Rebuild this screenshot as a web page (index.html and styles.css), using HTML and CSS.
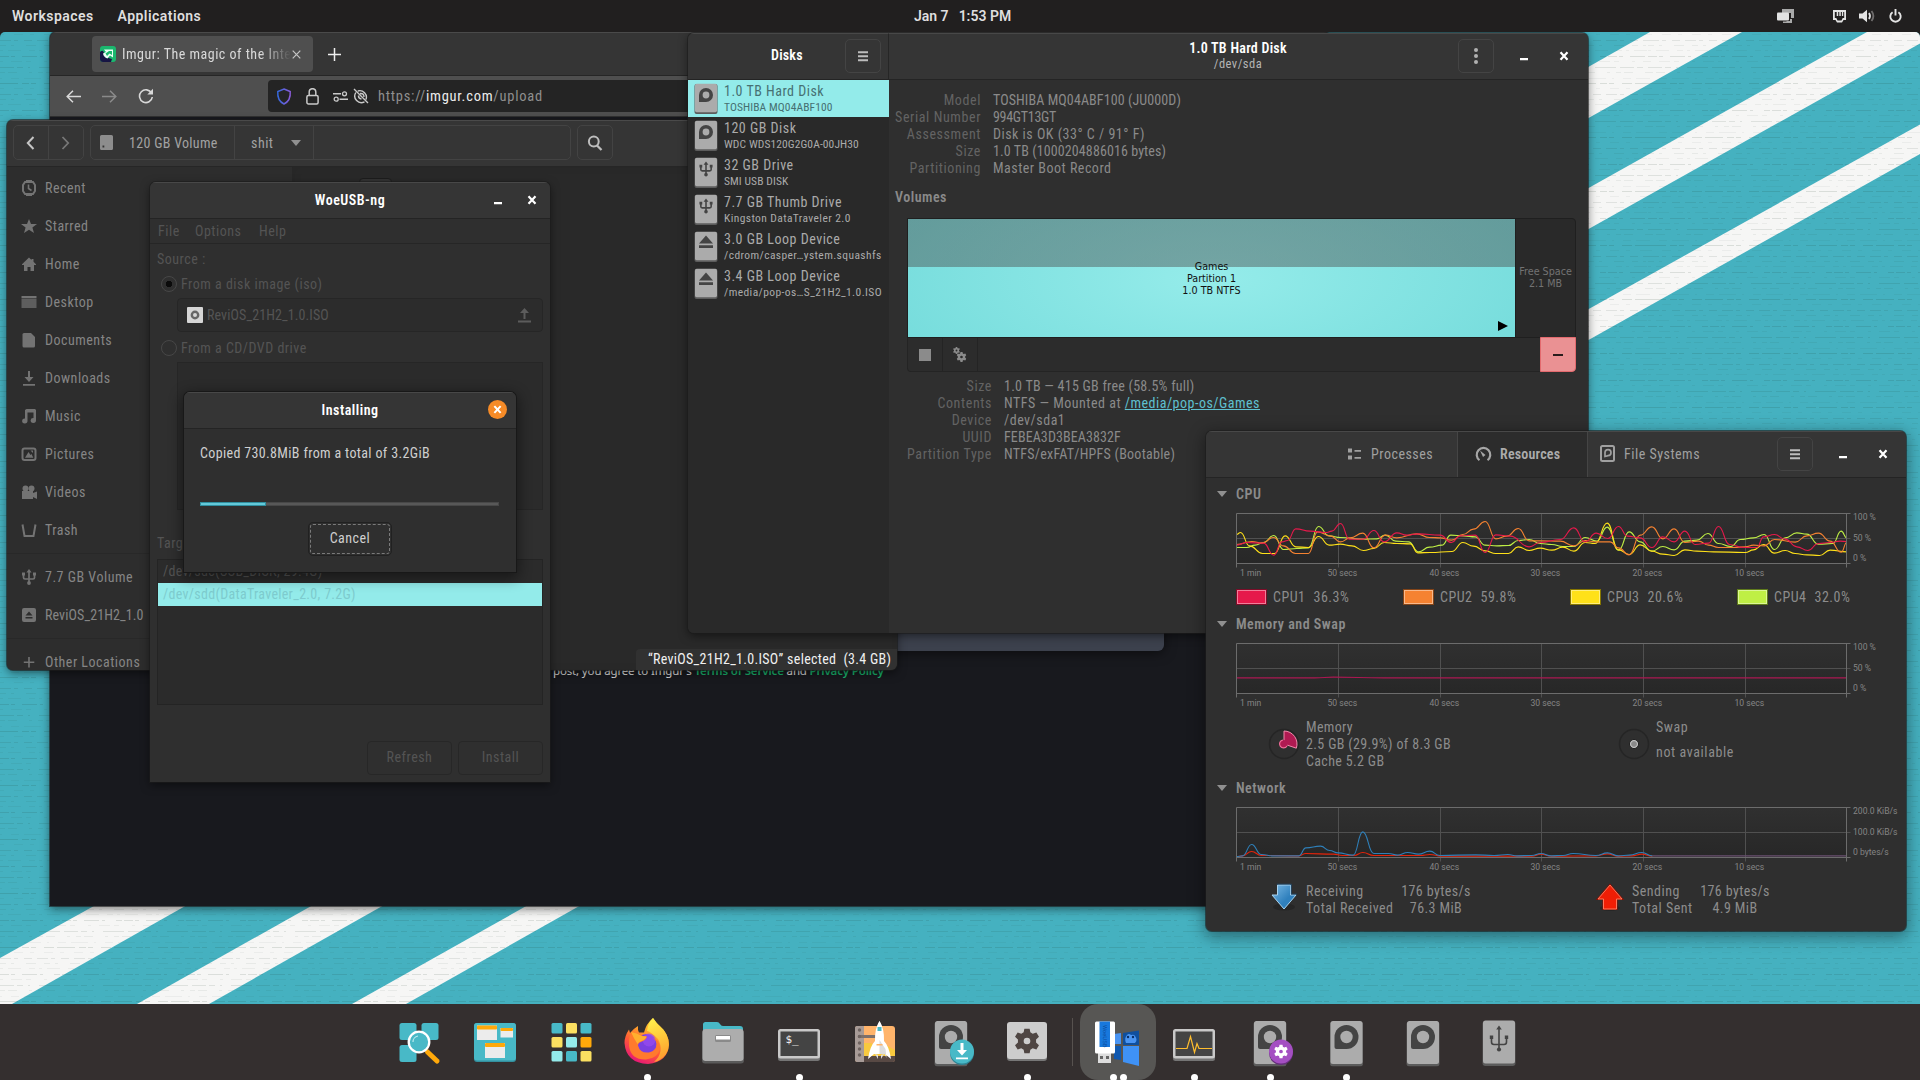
FILE: index.html
```html
<!DOCTYPE html>
<html lang="en">
<head>
<meta charset="utf-8">
<title>Desktop</title>
<link rel="stylesheet" href="styles.css">
</head>
<body>
<svg class="defs" width="0" height="0" aria-hidden="true">
  <defs>
    <symbol id="close" viewBox="0 0 10 10"><path d="M1.5 1.2 8.5 8.8M8.5 1.2 1.5 8.8" stroke="currentColor" stroke-width="2.2" fill="none"/></symbol>
    <symbol id="min" viewBox="0 0 10 10"><path d="M1 7h8v2.2H1z" fill="currentColor"/></symbol>
    <symbol id="menu" viewBox="0 0 12 12"><path d="M1 1.2h10v2H1zM1 5.2h10v2H1zM1 9.2h10v2H1z" fill="currentColor"/></symbol>
    <symbol id="usb" viewBox="0 0 16 16"><g fill="none" stroke="currentColor" stroke-width="1.7"><path d="M8 2.5V14M2.5 5v3.6q0 1.4 1.4 1.4h8.2q1.4 0 1.4-1.4V5"/></g><path d="M8 0l2.6 3.4H5.4z" fill="currentColor"/><path d="M1 3.5h3v3H1zM12 3.5h3v3h-3z" fill="currentColor"/><circle cx="8" cy="14" r="1.9" fill="currentColor"/></symbol>
    <symbol id="drive" viewBox="0 0 24 31"><rect x=".5" y="1" width="23" height="30" rx="2" fill="#5c5c5c"/><rect x="1" y=".8" width="22" height="28.4" rx="1.6" fill="#ababab"/></symbol>
    <symbol id="d-hdd" viewBox="0 0 24 31"><use href="#drive"/><path d="M5 19V12a7 7 0 1 1 7 7z" fill="#444"/><circle cx="12" cy="12" r="3.4" fill="#ababab"/></symbol>
    <symbol id="d-usb" viewBox="0 0 24 31"><use href="#drive"/><use href="#usb" x="4.5" y="4" width="15" height="16" color="#444"/></symbol>
    <symbol id="d-eject" viewBox="0 0 24 31"><use href="#drive"/><path d="M12 4.5 19 12.5H5zM5 14.3h14v2.8H5z" fill="#444"/></symbol>
    <symbol id="k-hdd" viewBox="0 0 34 46"><rect x=".5" y="1" width="33" height="45" rx="3" fill="#5c5c5c"/><rect x="1" y=".5" width="32" height="43" rx="2.500" fill="#acacac"/><path d="M5 16.500a12 12 0 1 1 12 12H7q-2 0-2-2z" fill="#444"/><circle cx="17" cy="16.500" r="6.200" fill="#acacac"/></symbol>
    <symbol id="gear" viewBox="0 0 24 24"><path fill="currentColor" fill-rule="evenodd" d="M9.500 0h5l.7 3.700 2.300 1.300L21 3.800l2.500 4.200-2.800 2.600v2.800l2.800 2.600L21 20.200l-3.500-1.200-2.300 1.300-.7 3.700h-5l-.7-3.700L6.500 19 3 20.200.5 16l2.800-2.600v-2.800L.5 8 3 3.800 6.500 5l2.300-1.300zM12 8.800a3.200 3.200 0 1 0 0 6.400 3.200 3.200 0 1 0 0-6.400z"/></symbol>
  </defs>
</svg>

<header class="topbar">
  <div class="topbar-side"><span class="ws">Workspaces</span><span class="apps">Applications</span></div>
  <div class="clock"><span>Jan 7</span><span>1:53 PM</span></div>
  <div class="tray">
    <svg class="tray-win" width="17" height="15" viewBox="0 0 17 15"><path d="M5 0h12v9h-3V4H5zM6 12.500h3.500V12H13V10h2v4H6z" fill="#a9a9a9"/><rect x="0" y="3.500" width="12" height="8" rx="1" fill="#e2e2e2"/></svg>
    <svg class="tray-net" width="15" height="13" viewBox="0 0 15 13"><path fill-rule="evenodd" fill="#e4e4e4" d="M1 0h13v10h-2.500l-1.500 2.500H5L3.500 10H1zM2.800 2v6h1.500l1.200 2.500h4L10.700 8h1.500V2h-1v4h-1.300V2H8.800v4H7.300V2H6.200v4H4.700V2z"/></svg>
    <svg class="tray-vol" width="17" height="14" viewBox="0 0 17 14"><path d="M0 4.500h3.500L8 0.800v12.400L3.500 9.500H0z" fill="#e4e4e4"/><path d="M10 4q2 3 0 6" stroke="#e4e4e4" stroke-width="1.800" fill="none"/><path d="M12.500 2q3.800 5 0 10" stroke="#6f6d6d" stroke-width="1.800" fill="none"/></svg>
    <svg width="13" height="14" viewBox="0 0 13 14"><path d="M3.600 3.200a5.200 5.200 0 1 0 5.800 0M6.500 0v6.500" stroke="#e4e4e4" stroke-width="1.900" fill="none"/></svg>
  </div>
</header>

<main class="desktop">
  <svg class="wallpaper" width="1920" height="972" viewBox="0 32 1920 972">
    <defs>
      <pattern id="weave" width="412" height="54" patternUnits="userSpaceOnUse">
        <g stroke="#17301f" stroke-width="1">
          <path d="M0 2.500H412" stroke-dasharray="9 2 4 7 15 3 3 11 6 2" opacity=".12"/>
          <path d="M0 7.500H412" stroke-dasharray="3 8 11 4 5 13" opacity=".06"/>
          <path d="M0 13.500H412" stroke-dasharray="14 3 6 5 2 9 21 4" opacity=".11"/>
          <path d="M0 18.500H412" stroke-dasharray="5 3 9 12 3 6" opacity=".07"/>
          <path d="M0 24.500H412" stroke-dasharray="2 9 8 5 17 6" opacity=".05"/>
          <path d="M0 29.500H412" stroke-dasharray="18 4 7 2 5 8 10 3" opacity=".13"/>
          <path d="M0 34.500H412" stroke-dasharray="4 10 9 7" opacity=".05"/>
          <path d="M0 40.500H412" stroke-dasharray="11 3 4 6 8 5" opacity=".1"/>
          <path d="M0 45.500H412" stroke-dasharray="6 5 3 12 10 8" opacity=".07"/>
          <path d="M0 50.500H412" stroke-dasharray="3 5 13 8 6 4" opacity=".06"/>
        </g>
      </pattern>
    </defs>
    <rect y="32" width="1920" height="972" fill="#45b1c0"/>
    <g fill="#f6f6f5">
      <path d="M1650 32H1742L1560 134V83z"/>
      <path d="M1867 32H1920V43.500L1560 245V204z"/>
      <path d="M1920 124.500V154L1560 356V325z"/>
      <path d="M112 896H203L12 1004H0V958z"/>
      <path d="M329 896H400L209 1004H137z"/>
      <path d="M544 896H597L406 1004H352z"/>
    </g>
    <rect y="32" width="1920" height="972" fill="url(#weave)"/>
  </svg>

  <section class="window firefox">
    <div class="ff-tabs">
      <div class="ff-tab">
        <svg width="16" height="16" viewBox="0 0 16 16"><rect width="16" height="16" rx="3" fill="#1bb76e"/><path d="M0 6q3-3 4 1 2 5 8 6l-1 3H3q-3 0-3-3z" fill="#171544"/><path d="M4 3.500h9v8l-3-2-2.500 3q-4-1.500-4.500-5l3-1.500z" fill="#e9fff4"/><path d="M5.500 7.500 9 5h3v4L9.500 7.500 7 10z" fill="#1bb76e"/></svg>
        <span class="ff-title">Imgur: The magic of the Internet</span>
        <svg class="ff-x" width="9" height="9" viewBox="0 0 9 9"><path d="M.7.700 8.300 8.300M8.300.700.7 8.300" stroke="#c4c4c4" stroke-width="1.200"/></svg>
      </div>
      <svg class="ff-plus" width="13" height="13" viewBox="0 0 13 13"><path d="M6.500 0v13M0 6.500h13" stroke="#f0f0f0" stroke-width="1.500"/></svg>
    </div>
    <div class="ff-nav">
      <svg width="15" height="13" viewBox="0 0 15 13" class="n-back"><path d="M15 6.500H1.500M7 .8 1.200 6.500 7 12.200" stroke="#d8d8d8" stroke-width="1.500" fill="none"/></svg>
      <svg width="15" height="13" viewBox="0 0 15 13" class="n-fwd"><path d="M0 6.500h13.500M8 .8l5.800 5.700L8 12.200" stroke="#8a8a8a" stroke-width="1.500" fill="none"/></svg>
      <svg width="16" height="16" viewBox="0 0 16 16" class="n-rel"><path d="M13.600 5.200A6.400 6.400 0 1 0 14.300 9" stroke="#d8d8d8" stroke-width="1.600" fill="none"/><path d="M15 .8V6.500H9.300z" fill="#d8d8d8"/></svg>
      <div class="ff-url">
        <svg width="16" height="17" viewBox="0 0 16 17"><path d="M8 1 14.200 3.500Q15 12.500 8 16 1 12.500 1.800 3.500z" stroke="url(#sh)" stroke-width="1.500" fill="none"/><defs><linearGradient id="sh" x2="1"><stop stop-color="#3468dc"/><stop offset="1" stop-color="#8a5bd8"/></linearGradient></defs></svg>
        <svg width="13" height="17" viewBox="0 0 13 17"><rect x=".9" y="7.500" width="11.200" height="8.500" rx="1.500" stroke="#c9c9c9" stroke-width="1.500" fill="none"/><path d="M3.200 7.500V4a3.300 3.300 0 0 1 6.600 0v3.500" stroke="#c9c9c9" stroke-width="1.500" fill="none"/></svg>
        <svg width="15" height="11" viewBox="0 0 15 11"><path d="M0 2.800h8M6.500 8.200H15" stroke="#c9c9c9" stroke-width="1.500"/><circle cx="11.500" cy="2.800" r="2" stroke="#c9c9c9" stroke-width="1.300" fill="none"/><circle cx="3.200" cy="8.200" r="2" stroke="#c9c9c9" stroke-width="1.300" fill="none"/></svg>
        <svg width="16" height="16" viewBox="0 0 16 16"><path d="M1 1l14 14M4.800 3A6.600 6.600 0 0 1 13 11.500M2.800 4.500A6.600 6.600 0 0 0 11.500 13.800M7 5.500q4-.5 4 3.500M5.500 7.500q-.2 3 3 3.500" stroke="#c9c9c9" stroke-width="1.400" fill="none"/></svg>
        <span class="url">https://<b>imgur.com</b>/upload</span>
      </div>
    </div>
    <div class="ff-page">
      <div class="ff-dropzone"></div>
      <p class="ff-terms">post, you agree to Imgur's <b>Terms of Service</b> and <b>Privacy Policy</b></p>
    </div>
  </section>

  <section class="window files">
    <div class="fl-head">
      <div class="btn-group nav-group">
        <span><svg width="9" height="14" viewBox="0 0 9 14"><path d="M7.500 1 1.800 7l5.700 6" stroke="#c5c5c5" stroke-width="2" fill="none"/></svg></span>
        <span><svg width="9" height="14" viewBox="0 0 9 14"><path d="M1.500 1 7.200 7l-5.700 6" stroke="#777" stroke-width="1.800" fill="none"/></svg></span>
      </div>
      <div class="btn-group path-group">
        <span class="p-vol"><svg width="13" height="15" viewBox="0 0 13 15"><path fill-rule="evenodd" fill="#8d8d8d" d="M1.500 0h10q1.500 0 1.500 1.500v12q0 1.500-1.500 1.500h-10Q0 15 0 13.500v-12Q0 0 1.500 0zM2.500 10.500v2h1.800v-2z"/></svg>120 GB Volume</span>
        <span class="p-dir">shit<i class="tri"></i></span>
        <span class="p-rest"></span>
      </div>
      <div class="btn-group find-group"><span><svg width="16" height="16" viewBox="0 0 16 16"><circle cx="6.800" cy="6.500" r="4.900" stroke="#bdbdbd" stroke-width="2" fill="none"/><path d="M10 10.500l4.500 4.500" stroke="#bdbdbd" stroke-width="2.300"/></svg></span></div>
    </div>
    <div class="fl-body">
      <nav class="fl-side">
        <div class="fl-row"><svg viewBox="0 0 16 16"><path fill="none" stroke="currentColor" stroke-width="2" d="M4 2h8l2 3v6l-2 3H4l-2-3V5z"/><path d="M5 0h6v2H5zM5 14h6v2H5z" fill="currentColor"/><path d="M7.500 4.500V8.500l3 2" stroke="currentColor" stroke-width="1.600" fill="none"/></svg>Recent</div>
        <div class="fl-row"><svg viewBox="0 0 16 16"><path fill="currentColor" d="M8 1l2 5h6l-4.600 3.500L13 15 8 11.800 3 15l1.600-5.500L0 6h6z"/></svg>Starred</div>
        <div class="fl-row"><svg viewBox="0 0 16 16"><path fill="currentColor" d="M8 1.500 1 8.200V9h2v6h3.500v-4h3v4H13V9h2V8.200L12.500 5.800V3h-2v1z"/></svg>Home</div>
        <div class="fl-row"><svg viewBox="0 0 16 16"><path fill="currentColor" d="M.5 2h15v2H.5z"/><path fill="currentColor" opacity=".7" d="M.5 4.500h15V14H.5z"/></svg>Desktop</div>
        <div class="fl-row"><svg viewBox="0 0 16 16"><path fill="currentColor" d="M3 1h7l4 4v9q0 1.500-1.500 1.500H3Q1.500 15.500 1.500 14V2.500Q1.500 1 3 1z"/></svg>Documents</div>
        <div class="fl-row"><svg viewBox="0 0 16 16"><path fill="currentColor" d="M7 1h2v6h3.500L8 12 3.500 7H7zM2 14h12v1.800H2z"/></svg>Downloads</div>
        <div class="fl-row"><svg viewBox="0 0 16 16"><path fill="currentColor" d="M4 2l1.500-1H14l1 1v10.500a2.700 2.500 0 1 1-2.500-2.500V4.500h-6V13a2.700 2.500 0 1 1-2.500-2.500z"/></svg>Music</div>
        <div class="fl-row"><svg viewBox="0 0 16 16"><rect x="1.500" y="2.500" width="13" height="11.500" rx="2" stroke="currentColor" stroke-width="2" fill="none"/><path fill="currentColor" d="M4 11.800 7.500 6l2 3 1-1 1.800 3.800zM9.500 4.500H12V7z"/></svg>Pictures</div>
        <div class="fl-row"><svg viewBox="0 0 16 16"><circle cx="4.500" cy="4.500" r="3" fill="currentColor"/><circle cx="10.500" cy="4.500" r="3" fill="currentColor"/><path fill="currentColor" d="M1 7h11v2l4-1.500V15l-4-2v2H1z"/></svg>Videos</div>
        <div class="fl-row"><svg viewBox="0 0 16 16"><path d="M1.500 2.500 3.500 14h9l2-11.500" stroke="currentColor" stroke-width="2" fill="none"/></svg>Trash</div>
        <hr>
        <div class="fl-row dev"><svg viewBox="0 0 16 16"><use href="#usb"/></svg>7.7 GB Volume</div>
        <div class="fl-row dev tight"><svg viewBox="0 0 16 16"><path fill="currentColor" fill-rule="evenodd" d="M3 1h10q2 0 2 2v10q0 2-2 2H3q-2 0-2-2V3q0-2 2-2zM8 4.500 4.500 8.500h7zM4.500 10v1.600h7V10z"/></svg>ReviOS_21H2_1.0</div>
        <hr>
        <div class="fl-row dev"><svg viewBox="0 0 16 16"><path d="M8 3v10.500M2.800 8.200h10.500" stroke="currentColor" stroke-width="1.600"/></svg>Other Locations</div>
      </nav>
      <div class="fl-main"><i class="fl-folder"></i><div class="fl-status">“ReviOS_21H2_1.0.ISO” selected&nbsp; (3.4 GB)</div></div>
    </div>
  </section>

  <section class="window woe">
    <div class="titlebar"><span class="title">WoeUSB-ng</span><span class="ctl"><svg><use href="#min"/></svg><svg><use href="#close"/></svg></span></div>
    <div class="woe-menu"><span class="m1">File</span><span class="m2">Options</span><span>Help</span></div>
    <div class="woe-body">
      <div class="woe-label">Source :</div>
      <div class="woe-radio"><i class="radio on"></i>From a disk image (iso)</div>
      <div class="woe-file"><svg width="16" height="16" viewBox="0 0 16 16"><rect width="16" height="16" rx="1" fill="#d6d6d6"/><circle cx="8" cy="8" r="3.200" fill="none" stroke="#666" stroke-width="2.400"/></svg><span class="tight">ReviOS_21H2_1.0.ISO</span><svg class="up" width="15" height="16" viewBox="0 0 15 16"><path d="M6.500 12V6H3l4.500-5L12 6H8.500v6zM1 13.500h13v2H1z" fill="#5c5c5c"/></svg></div>
      <div class="woe-radio r2"><i class="radio"></i>From a CD/DVD drive</div>
      <div class="woe-dvd"></div>
      <div class="woe-label target">Target device :</div>
      <div class="woe-list"><div>/dev/sdc(USB_DISK, 29.4G)</div><div class="sel">/dev/sdd(DataTraveler_2.0, 7.2G)</div></div>
      <div class="woe-btns"><span>Refresh</span><span>Install</span></div>
    </div>
  </section>

  <section class="window dialog">
    <div class="titlebar"><span class="title">Installing</span><span class="orange"><svg width="9" height="9"><use href="#close"/></svg></span></div>
    <div class="dlg-body">
      <p>Copied 730.8MiB from a total of 3.2GiB</p>
      <div class="bar"><i></i></div>
      <div class="cancel"><span>Cancel</span></div>
    </div>
  </section>

  <section class="window disks">
    <aside class="dk-side">
      <div class="dk-head"><span class="title">Disks</span><span class="hbtn"><svg width="12" height="12"><use href="#menu"/></svg></span></div>
      <div class="dk-row sel"><svg><use href="#d-hdd"/></svg><p>1.0 TB Hard Disk<small class="tight">TOSHIBA MQ04ABF100</small></p></div>
      <div class="dk-row"><svg><use href="#d-hdd"/></svg><p>120 GB Disk<small class="tight">WDC WDS120G2G0A-00JH30</small></p></div>
      <div class="dk-row"><svg><use href="#d-usb"/></svg><p>32 GB Drive<small class="tight">SMI USB DISK</small></p></div>
      <div class="dk-row"><svg><use href="#d-usb"/></svg><p>7.7 GB Thumb Drive<small>Kingston DataTraveler 2.0</small></p></div>
      <div class="dk-row"><svg><use href="#d-eject"/></svg><p>3.0 GB Loop Device<small>/cdrom/casper…ystem.squashfs</small></p></div>
      <div class="dk-row"><svg><use href="#d-eject"/></svg><p>3.4 GB Loop Device<small>/media/pop-os…S_21H2_1.0.ISO</small></p></div>
    </aside>
    <div class="dk-main">
      <div class="dk-head2">
        <div class="dk-title"><b>1.0 TB Hard Disk</b><span>/dev/sda</span></div>
        <span class="hbtn kebab"><svg width="6" height="16" viewBox="0 0 6 16" fill="#b0b0b0"><circle cx="3" cy="2" r="2"/><circle cx="3" cy="8" r="2"/><circle cx="3" cy="14" r="2"/></svg></span>
        <svg class="c-min"><use href="#min"/></svg><svg class="c-x"><use href="#close"/></svg>
      </div>
      <dl class="info top">
        <dt>Model</dt><dd class="tight">TOSHIBA MQ04ABF100 (JU000D)</dd>
        <dt>Serial Number</dt><dd class="tighter">994GT13GT</dd>
        <dt>Assessment</dt><dd>Disk is OK (33° C / 91° F)</dd>
        <dt>Size</dt><dd class="tight">1.0 TB (1000204886016 bytes)</dd>
        <dt>Partitioning</dt><dd>Master Boot Record</dd>
      </dl>
      <h3>Volumes</h3>
      <div class="vol">
        <div class="part"><p>Games<br>Partition 1<br>1.0 TB NTFS</p><i class="play"></i></div>
        <div class="free">Free Space<br>2.1 MB</div>
      </div>
      <div class="vtools">
        <span><i class="stop"></i></span>
        <span><svg width="14" height="15" viewBox="0 0 14 15" color="#8b8b8b"><use href="#gear" x="0" y="0" width="7" height="7"/><use href="#gear" x="3.500" y="5" width="10" height="10"/></svg></span>
        <span class="del"><i></i></span>
      </div>
      <dl class="info bottom">
        <dt>Size</dt><dd class="snug">1.0 TB — 415 GB free (58.5% full)</dd>
        <dt>Contents</dt><dd>NTFS — Mounted at <u>/media/pop-os/Games</u></dd>
        <dt>Device</dt><dd>/dev/sda1</dd>
        <dt>UUID</dt><dd class="tight">FEBEA3D3BEA3832F</dd>
        <dt>Partition Type</dt><dd class="snug">NTFS/exFAT/HPFS (Bootable)</dd>
      </dl>
    </div>
  </section>

  <section class="window mon">
    <div class="mn-head">
      <div class="tab t1"><svg width="14" height="12" viewBox="0 0 14 12" fill="#a0a0a0"><path d="M0 .5h4v4H0zM6.500 2H13v1.700H6.500zM0 7.500h4v4H0zM6.500 9H13v1.700H6.500z"/></svg>Processes</div>
      <div class="tab t2"><svg width="17" height="16" viewBox="0 0 17 16"><path d="M4.500 14.200a6.800 6.800 0 1 1 8 0" stroke="#a6a6a6" stroke-width="2.200" fill="none"/><path d="M5 4.500 10.500 9 8 11z" fill="#a6a6a6"/></svg>Resources</div>
      <div class="tab t3"><svg width="15" height="17" viewBox="0 0 15 17"><rect x="1" y="1" width="13" height="15" rx="1.500" stroke="#a0a0a0" stroke-width="2" fill="none"/><path d="M5 11.500V7.500a3 3 0 1 1 3 3.200z" stroke="#a0a0a0" stroke-width="1.700" fill="none"/></svg>File Systems</div>
      <span class="hbtn"><svg width="12" height="12"><use href="#menu"/></svg></span>
      <svg class="c-min"><use href="#min"/></svg><svg class="c-x"><use href="#close"/></svg>
    </div>
    <h4 class="h-cpu"><i class="tri"></i>CPU</h4>
    <svg class="chart" data-chart="cpu" data-top="100 %" data-mid="50 %" data-low="0 %"></svg>
    <div class="legend">
      <span><i class="c1"></i>CPU1<em>36.3%</em></span><span><i class="c2"></i>CPU2<em>59.8%</em></span><span><i class="c3"></i>CPU3<em>20.6%</em></span><span><i class="c4"></i>CPU4<em>32.0%</em></span>
    </div>
    <h4 class="h-mem"><i class="tri"></i>Memory and Swap</h4>
    <svg class="chart" data-chart="mem" data-top="100 %" data-mid="50 %" data-low="0 %"></svg>
    <div class="pair mem">
      <div><svg width="32" height="32" viewBox="0 0 32 32"><circle cx="16" cy="16" r="14.500" fill="none" stroke="#252525" stroke-width="1.500"/><path d="M16 3A13 13 0 0 1 28.300 20.200L16 16z" fill="#b01a52" stroke="#ee8aab" stroke-width="1"/><circle cx="15.500" cy="16" r="4" fill="#b01a52"/><path d="M15 12a4 4 0 1 0 4 6" fill="none" stroke="#ee6d98" stroke-width="1.200"/></svg><p>Memory<br>2.5 GB (29.9%) of 8.3 GB<br>Cache 5.2 GB</p></div>
      <div><svg width="32" height="32" viewBox="0 0 32 32"><circle cx="16" cy="16" r="14.500" fill="none" stroke="#252525" stroke-width="1.500"/><circle cx="16" cy="16" r="4.500" fill="#8a8a8a" stroke="#1d1d1d"/><circle cx="16" cy="16" r="3.500" fill="none" stroke="#c9c9c9"/></svg><p class="swap">Swap<span>not available</span></p></div>
    </div>
    <h4 class="h-net"><i class="tri"></i>Network</h4>
    <svg class="chart" data-chart="net" data-top="200.0 KiB/s" data-mid="100.0 KiB/s" data-low="0 bytes/s"></svg>
    <div class="pair net">
      <div><svg width="28" height="30" viewBox="0 0 28 30"><defs><linearGradient id="gb" x2="1" y2="1"><stop stop-color="#7ab8e4"/><stop offset=".6" stop-color="#2f80bd"/></linearGradient></defs><ellipse cx="14" cy="25" rx="11" ry="3.500" fill="#222" opacity=".7"/><path d="M7.500 3h13v10H26L14 27 2 13h5.500z" fill="url(#gb)" stroke="#a8d2ee"/><path d="M6.800 2.200h14.500v10h5.800" fill="none" stroke="#1d527c" stroke-width=".7"/></svg><p>Receiving<br>Total Received</p><p class="val v1">176 bytes/s<br>76.3 MiB</p></div>
      <div><svg width="28" height="30" viewBox="0 0 28 30"><ellipse cx="14" cy="26" rx="10" ry="3" fill="#222" opacity=".7"/><path d="M7.500 27h13V17H26L14 3 2 17h5.500z" fill="#f01e05" stroke="#8d0d00" stroke-width="2"/><path d="M7.500 27h13V17H26L14 3 2 17h5.500z" fill="#f01e05" stroke="#ff8468" stroke-width=".9"/></svg><p>Sending<br>Total Sent</p><p class="val v2">176 bytes/s<br>4.9 MiB</p></div>
    </div>
  </section>
</main>

<footer class="dock">
  <div class="slot"><svg viewBox="0 0 76 76"><g fill="#48b9c7"><rect x="18.500" y="19" width="17" height="17" rx="2.500"/><rect x="40.500" y="19" width="17" height="17" rx="2.500"/><rect x="18.500" y="41" width="17" height="17" rx="2.500"/></g><path d="M46.500 48 56 57" stroke="#ffa90a" stroke-width="5" stroke-linecap="round"/><circle cx="38" cy="38" r="10.300" fill="#48b9c7" stroke="#fff" stroke-width="2.300"/><path d="M32 38a6 6 0 0 1 5-6" stroke="#b7e9ef" stroke-width="1.200" fill="none"/></svg></div>
  <div class="slot"><svg viewBox="0 0 76 76"><rect x="17" y="19" width="42" height="39" rx="3" fill="#34909f"/><rect x="17" y="19" width="42" height="37.500" rx="3" fill="#48b9c7"/><g fill="#ececec"><rect x="20" y="21.500" width="20" height="14.500"/><rect x="43.500" y="24" width="12.500" height="9.500"/><rect x="28" y="39" width="20" height="15"/></g><g fill="#ffa90a"><rect x="20" y="21.500" width="20" height="4" rx="1"/><rect x="43.500" y="24" width="12.500" height="3" rx="1"/><rect x="28" y="39" width="20" height="4" rx="1"/></g></svg></div>
  <div class="slot"><svg viewBox="0 0 76 76"><g fill="#48b9c7"><rect x="18.500" y="19" width="11" height="10.500" rx="1.500"/><rect x="47.500" y="19" width="11" height="10.500" rx="1.500"/><rect x="33" y="47" width="11" height="10.500" rx="1.500"/></g><g fill="#fbe061"><rect x="33" y="19" width="11" height="10.500" rx="1.500"/><rect x="18.500" y="33" width="11" height="10.500" rx="1.500"/><rect x="47.500" y="47" width="11" height="10.500" rx="1.500"/></g><g fill="#94ebeb"><rect x="33" y="33" width="11" height="10.500" rx="1.500"/><rect x="18.500" y="47" width="11" height="10.500" rx="1.500"/></g><rect x="47.500" y="33" width="11" height="10.500" rx="1.500" fill="#ffa90a"/></svg></div>
  <div class="slot"><svg viewBox="0 0 76 76"><defs><linearGradient id="fx" x1=".8" y1="0" x2=".3" y2="1"><stop stop-color="#ffe83e"/><stop offset=".35" stop-color="#ffa42a"/><stop offset=".65" stop-color="#ff5a36"/><stop offset="1" stop-color="#e5137b"/></linearGradient><linearGradient id="fy" x1=".3" y1="0" x2=".7" y2="1"><stop stop-color="#fff44f"/><stop offset="1" stop-color="#ffa52c"/></linearGradient></defs><path d="M44 14q4 6 8 9 8 8 8 17.500Q59 58 39 60 17 59 15.500 39q0-7 4.500-13.500l1 3.500q3-4 8-7-.5 4 1 6.500h5Q37 20 44 14z" fill="url(#fx)"/><path d="M44 14q6 9 10 11 8 10 5 21-4 10-14 12Q56 48 49 35q-8-8-11-8 1-8 6-13z" fill="url(#fy)" opacity=".85"/><circle cx="37.500" cy="40" r="10" fill="#7b3fe0"/><circle cx="40" cy="36" r="6.500" fill="#9a4df0" opacity=".7"/><path d="M22 29q7 0 12 3l4 .5q-.5 3-5 5-4 1-4 4 2 8 11 7 8-2 8-9-2-5-5-6 8 2 8 11-2 10-14 11Q22 56 20 42q-.5-8 2-13z" fill="#ff7a2d"/><path d="M22 28q6 1 11 4l4.500.5q-1 3-5 4.500-3 1-4 3-4-6-6.500-12z" fill="#ffb02e"/></svg><i class="dot"></i></div>
  <div class="slot"><svg viewBox="0 0 76 76"><path d="M18 31V20.500q0-2.500 2.500-2.500H32q2 0 3 2t3 2h17q3 0 3 3v5z" fill="#48b9c7"/><rect x="17" y="26" width="42" height="33.500" rx="3" fill="#5a5a5a"/><rect x="17.500" y="25" width="41" height="32" rx="3" fill="#adadad"/><rect x="30" y="31" width="16" height="7" rx="1.500" fill="#8a8a8a"/><rect x="31" y="32" width="14" height="3.500" fill="#fff"/></svg></div>
  <div class="slot"><svg viewBox="0 0 76 76"><rect x="17" y="26" width="42" height="31" rx="2.500" fill="#757575"/><rect x="17" y="25" width="42" height="29.500" rx="2.500" fill="#c9c9c9"/><rect x="19.500" y="27.500" width="37" height="24.500" fill="#444"/><text x="24.500" y="38.500" class="prompt">$_</text></svg><i class="dot"></i></div>
  <div class="slot"><svg viewBox="0 0 76 76"><rect x="18" y="22" width="40" height="36" rx="3" fill="#ffb46b"/><path d="M24 39h10l5 3 10-1 9 5v7H24z" fill="#f8c93f"/><path d="M24 52h34v4q0 2-2 2H24z" fill="#584944"/><path d="M27 22h-7q-2 0-2 2v32q0 2 2 2h7z" fill="#a79b97"/><path d="M21 31h18v3H21z" fill="#7c706c"/><g fill="#6f6461"><circle cx="22.500" cy="26" r="1.700"/><circle cx="22.500" cy="32.500" r="1.700"/><circle cx="22.500" cy="39" r="1.700"/><circle cx="22.500" cy="45" r="1.700"/><circle cx="22.500" cy="51" r="1.700"/></g><path d="M42.500 17q5 8 4.500 20 5 5 7 18l-6-5h-11l-6 5q2-13 7-18-.5-12 4.500-20z" fill="#fff"/><path d="M42.500 36v14h5l2 4-1-9zM38 50l3 1v4zM47 50l-3 1v4z" fill="#ddd"/><path d="M42.500 17q2 3.500 2.500 7h-5q.5-3.500 2.500-7z" fill="#fff"/><path d="M40.500 23h4v4h-4z" fill="#48b9c7"/><path d="M39.500 40h6v1.500h-6z" fill="#ffb46b"/></svg></div>
  <div class="slot"><svg viewBox="0 0 76 76"><use href="#k-hdd" x="21" y="16.500" width="34" height="46"/><circle cx="49" cy="49" r="12" fill="#2f8494"/><circle cx="49" cy="47.500" r="12" fill="#48b9c7"/><path d="M47.500 39h3v7h3.500L49 51.500 44 46h3.500zM43 53.500h12v1.800H43z" fill="#fff"/></svg></div>
  <div class="slot"><svg viewBox="0 0 76 76"><rect x="18" y="19" width="40" height="38" rx="3" fill="#777"/><rect x="18" y="18" width="40" height="37" rx="3" fill="#cdcdcd"/><use href="#gear" x="25.500" y="24.500" width="25" height="25" color="#4f4643"/></svg><i class="dot"></i></div>
  <div class="sep"></div>
  <div class="slot active"><svg viewBox="0 0 76 76"><path d="M34 30 41 29V40H34z" fill="#4a94f2"/><path d="M43 29 59 26.500V41H43z" fill="#0f4f9e"/><path d="M34 42h7v14l-7-1z" fill="#0f58b0"/><path d="M43 42h16v20l-16-4z" fill="#3f92f6"/><path d="M46 39q-2-5 1-8 2-2 4 0 3-1 4 1 3 4 0 7z" fill="#4a94f2"/><circle cx="48" cy="33" r="1.200" fill="#0a2f66"/><circle cx="53" cy="33" r="1.200" fill="#0a2f66"/><rect x="18" y="47" width="13" height="12" fill="#ddd"/><path d="M20 52h3v3h-3zM26 52h3v3h-3z" fill="#666"/><rect x="15" y="17.500" width="20" height="32" rx="1.500" fill="#fff"/><rect x="19.500" y="17.500" width="10.500" height="25.500" fill="#1878dd"/><text transform="translate(22.500 21) rotate(90)" class="stick">WoeUSB</text></svg><i class="dot two"></i></div>
  <div class="slot"><svg viewBox="0 0 76 76"><rect x="17" y="26" width="42" height="31" rx="2.500" fill="#757575"/><rect x="17" y="25" width="42" height="29.500" rx="2.500" fill="#c9c9c9"/><rect x="19.500" y="27.500" width="37" height="24.500" fill="#444"/><path d="M20 44.500h11l3.500-12 4 16 2.500-9 2 5h13" stroke="#ffbe2e" stroke-width="1.200" fill="none"/></svg><i class="dot"></i></div>
  <div class="slot"><svg viewBox="0 0 76 76"><use href="#k-hdd" x="21" y="16.500" width="34" height="46"/><circle cx="49" cy="49" r="12" fill="#65307a"/><circle cx="49" cy="47.500" r="12" fill="#a44fc2"/><use href="#gear" x="42" y="40.500" width="14" height="14" color="#fff"/></svg><i class="dot"></i></div>
  <div class="slot"><svg viewBox="0 0 76 76"><use href="#k-hdd" x="21.500" y="16.500" width="34" height="46"/></svg><i class="dot"></i></div>
  <div class="slot"><svg viewBox="0 0 76 76"><use href="#k-hdd" x="22" y="16.500" width="34" height="46"/></svg></div>
  <div class="slot"><svg viewBox="-1 0 76 76"><rect x="21.500" y="17" width="33" height="45" rx="3" fill="#5c5c5c"/><rect x="22" y="16.500" width="32" height="43" rx="2.500" fill="#acacac"/><path d="M38 24v20M30.500 33v5q0 2.500 2.500 2.500h10q2.500 0 2.500-2.500v-5" fill="none" stroke="#444" stroke-width="1.600"/><path d="M38 21.500l2.800 4h-5.600zM28.800 31.500h3.400v3.400h-3.400zM43.800 31.500h3.400v3.400h-3.400z" fill="#444"/><circle cx="38" cy="45.500" r="2.100" fill="#444"/></svg></div>
</footer>
<script src="charts.js"></script>
</body>
</html>
```
FILE: styles.css
```css
* { box-sizing: border-box; }
body { margin: 0; width: 1920px; height: 1080px; overflow: hidden; background: #211f1f; font: 14px "Roboto", "Noto Sans", sans-serif; font-stretch: 87.5%; letter-spacing: .5px; color: #8c8c8c; display: flex; flex-direction: column; }
p, dl, dd, h3, h4 { margin: 0; }
svg { display: block; flex: none; }
.defs { position: absolute; }
b, .title { font-weight: 600; }
.snug { letter-spacing: .25px; }
.tight { letter-spacing: .1px; }
.tighter { letter-spacing: -.3px; }

/* top panel */
.topbar { height: 32px; flex: none; display: grid; grid-template-columns: 914px 1fr auto; align-items: center; color: #dfdede; font-weight: 600; font-stretch: 100%; letter-spacing: 0; }
.topbar-side { padding-left: 12px; display: flex; gap: 24px; letter-spacing: .45px; }
.clock { display: flex; gap: 10px; }
.tray { display: flex; align-items: center; padding-right: 18px; }
.tray-win { margin-right: 38px; }
.tray-net { margin-right: 12px; }
.tray-vol { margin-right: 13px; }

.desktop { position: relative; height: 972px; flex: none; overflow: hidden; }
.wallpaper { border-radius: 5px 5px 0 0; }
.window { position: absolute; background: #2f2f2f; border-radius: 6px; overflow: hidden; box-shadow: 0 0 0 1px #1d1d1d99, 0 3px 10px #00000080; display: flex; flex-direction: column; }

/* browser */
.firefox { left: 50px; top: 0; width: 1280px; height: 874px; background: #18191e; border-radius: 6px 6px 0 0; }
.ff-tabs { height: 44px; flex: none; background: #353535; border-top: 1px solid #4a4a4a; border-bottom: 1px solid #262626; padding: 3px 0 0 42px; display: flex; }
.ff-tab { width: 221px; height: 36px; background: #4f4f4f; border-radius: 4px; padding: 0 12px 0 8px; display: flex; align-items: center; color: #d9d9d9; }
.ff-title { margin-left: 6px; width: 169px; white-space: nowrap; overflow: hidden; -webkit-mask-image: linear-gradient(90deg, #000 82%, transparent); mask-image: linear-gradient(90deg, #000 82%, transparent); }
.ff-x { margin-left: 1px; }
.ff-plus { margin: 12px 0 0 15px; }
.ff-nav { height: 41px; flex: none; background: #4f4f4f; border-bottom: 1px solid #303030; display: flex; align-items: center; padding-left: 16px; }
.n-fwd { margin-left: 21px; }
.n-rel { margin-left: 21px; }
.ff-url { margin-left: 114px; flex: 1; height: 32px; background: #242424; border-radius: 4px; display: flex; align-items: center; padding-left: 8px; }
.ff-url svg + svg { margin-left: 14px; }
.ff-url svg:nth-child(4) { margin-left: 5px; }
.url { margin-left: 9px; color: #8f8f8f; font-size: 14.5px; letter-spacing: .75px; }
.url b { font-weight: 400; color: #ececec; }
.ff-page { flex: 1; display: flex; flex-direction: column; }
.ff-dropzone { margin: 300px 0 0 600px; width: 514px; height: 234px; background: #3c414d; border-radius: 6px; box-shadow: 0 2px 12px #0008; }
.ff-terms { margin: 11px 0 0 503px; font: 11.5px/18px "Noto Sans", sans-serif; letter-spacing: -.15px; color: #e0e0e0; white-space: nowrap; }
.ff-terms b { color: #18b06b; }

/* file manager */
.files { left: 7px; top: 88px; width: 890px; height: 550px; background: #292929; }
.fl-head { height: 47px; flex: none; background: #353535; border-top: 1px solid #4a4a4a; border-bottom: 1px solid #262626; display: flex; padding: 4px 0 0 6px; gap: 6px; }
.btn-group { display: flex; height: 35px; border: 1px solid #434343; border-radius: 5px; color: #a2a2a2; }
.btn-group span { display: flex; align-items: center; justify-content: center; }
.btn-group span + span { border-left: 1px solid #434343; }
.nav-group { width: 71px; }
.nav-group span { flex: 1; padding-right: 2px; }
.path-group { width: 481px; }
.path-group .p-vol { width: 143px; gap: 16px; padding-left: 9px; justify-content: flex-start; letter-spacing: .3px; }
.path-group .p-dir { width: 79px; padding: 0 12px 0 16px; justify-content: space-between; }
.find-group { width: 36px; justify-content: center; }
.tri { border: 5px solid transparent; border-top: 6px solid #909090; border-bottom: 0; }
.fl-body { flex: 1; display: flex; min-height: 0; }
.fl-side { width: 285px; background: #2d2d2d; padding-top: 2px; overflow: hidden; }
.fl-row { height: 38px; display: flex; align-items: center; padding-left: 14px; gap: 8px; color: #858585; }
.fl-row svg { width: 16px; height: 16px; color: #737373; }
.fl-side hr { border: 0; border-top: 1px solid #282828; margin: 4px 0; }
.fl-main { flex: 1; display: flex; flex-direction: column; justify-content: space-between; align-items: flex-end; box-shadow: inset 2px 0 8px #0001; }
.fl-folder { width: 33px; height: 12px; border: 1px solid #1d1d1d; border-radius: 4px; background: #333; margin: 11px 505px 0 0; }
.fl-status { width: 261px; height: 21px; background: #313131; border-radius: 4px 0 4px 0; color: #f0f0f0; padding-left: 12px; line-height: 20px; white-space: nowrap; letter-spacing: .3px; }

/* shared title bars */
.titlebar { height: 37px; flex: none; background: #353535; border-top: 1px solid #484848; border-bottom: 1px solid #242424; display: grid; grid-template-columns: 1fr; align-items: center; padding-bottom: 2px; }
.titlebar > * { grid-area: 1 / 1; }
.title { color: #fff; text-align: center; }
.ctl { justify-self: end; display: flex; gap: 24px; padding-right: 13px; color: #fff; }
.ctl svg, .c-min, .c-x { width: 10px; height: 10px; color: #fff; }

/* WoeUSB */
.woe { left: 150px; top: 150px; width: 400px; height: 600px; border-radius: 6px 6px 0 0; color: #545454; }
.woe-menu { height: 25px; flex: none; border-bottom: 1px solid #262626; padding: 0 8px; display: flex; align-items: center; }
.m1 { width: 37px; } .m2 { width: 64px; }
.woe-body { padding: 0 7px; display: flex; flex-direction: column; }
.woe-label { height: 31px; line-height: 31px; }
.woe-radio { height: 18px; display: flex; align-items: center; gap: 4px; padding-left: 4px; }
.radio { width: 16px; height: 16px; border: 1px solid #474747; border-radius: 50%; }
.radio.on { background: radial-gradient(circle, #0b0b0b 3px, transparent 3.500px); }
.woe-file { margin: 5px 0 0 20px; height: 34px; border: 1px solid #262626; border-radius: 4px; background: #2c2c2c; display: flex; align-items: center; padding: 0 10px 0 9px; gap: 4px; }
.woe-file .up { margin-left: auto; }
.r2 { margin-top: 7px; }
.woe-dvd { margin: 5px 0 0 20px; height: 148px; border: 1px solid #262626; background: #2b2b2b; }
.target { margin-top: 18px; }
.woe-list { height: 146px; border: 1px solid #242424; background: #2b2b2b; line-height: 23px; letter-spacing: .3px; }
.woe-list div { padding-left: 5px; }
.woe-list .sel { background: #93ebea; color: #7ecbce; }
.woe-btns { margin-top: 36px; display: flex; justify-content: flex-end; gap: 6px; }
.woe-btns span { width: 85px; height: 34px; border: 1px solid #272727; border-radius: 4px; line-height: 31px; text-align: center; }

/* progress dialog */
.dialog { left: 184px; top: 360px; width: 332px; height: 180px; border-radius: 6px 6px 0 0; box-shadow: 0 0 0 1px #181818, 0 4px 14px 2px #0007; }
.orange { justify-self: end; margin-right: 9px; width: 19px; height: 19px; border-radius: 50%; background: #f68b27; color: #fff; display: grid; place-items: center; }
.dlg-body { padding: 0 16px; color: #d0d0d0; display: flex; flex-direction: column; }
.dlg-body p { line-height: 20px; margin-top: 14px; letter-spacing: .35px; }
.bar { margin-top: 39px; width: 299px; height: 4px; background: #585858; border: 1px solid #484848; display: flex; }
.bar i { width: 66px; height: 4px; margin: -1px; background: #64c9d9; border: 1px solid #2f8fa0; }
.cancel { align-self: center; margin-top: 16px; width: 84px; height: 34px; border: 1px solid #212121; border-radius: 5px; padding: 1px; }
.cancel span { display: block; height: 30px; line-height: 27px; text-align: center; border: 1px dashed #7a7a7a; border-radius: 3px; }

/* disk utility */
.disks { left: 688px; top: 1px; width: 900px; height: 600px; flex-direction: row; }
.dk-side { width: 201px; background: #292929; flex: none; }
.dk-head, .dk-head2, .mn-head { height: 47px; background: #353535; border-top: 1px solid #484848; border-bottom: 1px solid #242424; display: flex; }
.dk-head { padding: 5px 7px 0 83px; border-right: 1px solid #262626; }
.dk-head .title { width: 74px; line-height: 33px; text-align: left; letter-spacing: .2px; }
.hbtn { width: 36px; height: 34px; border: 1px solid #444; border-radius: 5px; display: grid; place-items: center; color: #bdbdbd; flex: none; }
.dk-row { height: 37px; display: flex; align-items: center; padding-left: 6px; gap: 6px; color: #ababab; }
.dk-row svg { width: 24px; height: 31px; }
.dk-row p { line-height: 18px; white-space: nowrap; margin-top: -2px; }
.dk-row small { display: block; font-size: 11.500px; line-height: 14px; }
.dk-row small:not(.tight) { letter-spacing: .4px; }
.dk-row.sel { background: #93ebea; color: #467072; }
.dk-main { flex: 1; display: flex; flex-direction: column; }
.dk-head2 { padding-top: 5px; flex: none; }
.dk-title { width: 220px; margin-left: 239px; text-align: center; color: #b5b5b5; font-size: 12.500px; line-height: 15px; display: flex; flex-direction: column; padding-top: 2px; }
.dk-title b { color: #fff; font-size: 14px; letter-spacing: .25px; }
.kebab { margin-left: 110px; }
.c-min { margin: 12px 0 0 25px; }
.c-x { margin: 12px 0 0 30px; }
.info { display: grid; row-gap: 0; column-gap: 12px; line-height: 17px; color: #8a8a8a; }
.info dt { text-align: right; color: #636363; letter-spacing: .6px; }
.info u { color: #5fc0cf; }
.info.top { grid-template-columns: 92px 1fr; margin-top: 12px; }
.info.bottom { grid-template-columns: 103px 1fr; margin-top: 6px; }
h3 { font-size: 14px; font-weight: 600; color: #8a8a8a; margin: 10px 0 0 6px; height: 31px; line-height: 21px; }
.vol { margin: 0 12px 0 18px; height: 120px; border: 1px solid #1f1f1f; border-radius: 0 4px 0 0; display: flex; font: 9.600px/12px "DejaVu Sans", sans-serif; letter-spacing: 0; text-align: center; background: #292929; }
.part { width: 607px; background: linear-gradient(#4a4a4a70 0 48px, transparent 48px), radial-gradient(ellipse 65% 130%, #95ecea, #72dada); color: #111; display: grid; place-items: center; }
.part > * { grid-area: 1 / 1; }
.part p { padding-top: 2px; }
.play { place-self: end; border: 5.500px solid transparent; border-left: 10px solid #000; border-right: 0; margin: 0 7px 6px 0; }
.free { flex: 1; border-left: 1px solid #1f1f1f; display: grid; align-content: center; color: #737373; white-space: nowrap; }
.vtools { margin: 0 12px 0 18px; height: 34px; border: 1px solid #242424; border-top: 0; border-radius: 0 0 4px 4px; background: #2c2c2c; display: flex; }
.vtools span { width: 35px; border-right: 1px solid #242424; display: grid; place-items: center; }
.stop { width: 12px; height: 12px; background: #8b8b8b; }
.vtools .del { margin: -1px -1px -1px auto; width: 36px; background: #ea9193; border: 1px solid #e36a6e; border-radius: 0 0 4px 0; }
.del i { width: 10px; height: 2px; background: #2a1c1c; }

/* system monitor */
.mon { left: 1206px; top: 399px; width: 700px; height: 500px; box-shadow: 0 0 0 1px #1d1d1d99, 0 4px 16px 2px #0006; }
.mn-head { flex: none; padding-top: 0; }
.tab { display: flex; align-items: center; color: #a0a0a0; gap: 9px; padding-bottom: 2px; border-right: 1px solid #454545; }
.t1 { width: 252px; padding-left: 142px; }
.t2 { width: 130px; padding-left: 17px; gap: 8px; background: #2c2c2c; color: #acacac; font-weight: 600; letter-spacing: .2px; }
.t3 { width: 189px; padding-left: 12px; border: 0; }
.mn-head .hbtn { margin-top: 5px; }
.mn-head .c-min { margin-top: 17px; margin-left: 25px; }
.mn-head .c-x { margin-top: 17px; }
h4 { display: flex; align-items: center; gap: 9px; padding-left: 11px; height: 22px; font-size: 14px; font-weight: 600; color: #8b8b8b; flex: none; }
.h-cpu { margin-top: 5px; }
.h-mem { margin-top: 8px; }
.h-net { margin-top: 7px; }
.chart { width: 690px; height: 72px; margin: 2px 0 -2px 10px; }
.chart text { font: 8.600px "Roboto", sans-serif; letter-spacing: 0; fill: #858585; }
.legend { display: flex; margin: 11px 0 0 30px; height: 17px; }
.legend span { width: 167px; display: flex; align-items: center; }
.legend i { width: 31px; height: 16px; margin-right: 6px; border: 1px solid; box-shadow: inset 0 0 0 1px #ffffff70; }
.legend em { font-style: normal; margin-left: 8px; }
.c1 { background: #e6194b; border-color: #7b0d28 !important; }
.c2 { background: #f58231; border-color: #834418 !important; }
.c3 { background: #ffe119; border-color: #857500 !important; }
.c4 { background: #bfef45; border-color: #5f7a1c !important; }
.pair { display: grid; grid-template-columns: 350px 1fr; padding-left: 62px; line-height: 17px; }
.pair > div { display: flex; }
.mem { margin-top: 12px; height: 51px; letter-spacing: .35px; }
.mem svg { margin-top: 9px; }
.mem p { margin-left: 6px; }
.swap { letter-spacing: .6px; }
.swap span { display: block; margin-top: 8px; }
.net { margin-top: 12px; padding-left: 64px; grid-template-columns: 326px 1fr; }
.net svg { margin-top: -1px; }
.net p { margin-left: 8px; width: 88px; white-space: nowrap; }
.net .val { text-align: center; width: 72px; margin-left: 6px; letter-spacing: .4px; }
.net .v2 { margin-left: -21px; }

/* dock */
.dock { height: 76px; background: #342f2f; display: flex; padding-left: 381px; letter-spacing: 0; }
.slot { width: 76px; height: 76px; position: relative; }
.slot svg { width: 76px; height: 76px; }
.sep { width: 1px; height: 48px; margin: 14px 7px; background: #57524f; }
.active { background: #575654; border-radius: 18px; }
.dot { position: absolute; left: 34.500px; top: 69.500px; width: 7px; height: 7px; border-radius: 50%; background: #fff; }
.dot.two { left: 29.500px; box-shadow: 10px 0 0 #fff; }
.prompt { font: 11px "DejaVu Sans Mono", monospace; fill: #f2f2f2; }
.stick { font: 5.500px "Liberation Sans", sans-serif; fill: #0c4c9b; }
```
FILE: charts.js
```javascript
const series = {
  cpu: {
    sx: 1 / 3, sy: 1 / 3, ox: 19, oy: 25,
    lines: [
      ['#bfef45', '19,127 50,127 75,120 100,112 131,91 160,133 200,130 235,128 265,64 297,92 331,97 400,102 440,101 465,90 497,108 535,110 565,140 598,126 635,120 662,90 700,92 735,95 765,120 800,122 835,121 864,106 897,103 930,115 965,118 998,124 1031,124 1065,97 1100,108 1131,66 1165,135 1197,80 1230,110 1265,138 1298,124 1332,134 1364,108 1400,105 1433,85 1465,115 1502,124 1530,103 1570,98 1602,88 1633,133 1665,98 1700,83 1730,87 1765,117 1808,115 1833,78 1850,98'],
      ['#ffe119', '19,88 31,82 58,122 97,145 133,145 165,92 197,125 235,127 265,94 297,120 330,117 365,122 400,136 431,130 462,112 500,115 540,116 563,143 600,142 665,139 698,112 730,123 765,137 797,145 835,145 864,125 897,136 930,129 965,135 998,126 1031,138 1065,112 1095,115 1131,54 1165,134 1197,148 1230,119 1265,138 1298,147 1332,151 1364,134 1400,138 1450,140 1545,142 1570,134 1600,118 1633,144 1665,136 1695,145 1730,149 1768,151 1800,135 1850,140'],
      ['#f58231', '19,118 65,109 95,114 130,97 160,122 196,145 235,145 262,80 300,92 331,110 360,98 398,84 431,128 465,90 500,98 560,86 598,97 630,98 664,105 698,88 730,72 765,49 797,101 830,93 864,70 897,107 930,107 990,108 1031,122 1065,106 1098,110 1140,110 1165,128 1197,149 1230,90 1265,65 1298,101 1332,71 1364,112 1405,108 1435,120 1465,127 1510,127 1545,125 1570,120 1602,122 1633,103 1695,111 1730,92 1765,84 1800,108 1833,141 1850,112'],
      ['#e6194b', '19,120 50,112 100,114 131,150 155,110 172,106 197,71 240,78 290,82 305,78 331,55 358,102 400,102 431,76 462,110 500,83 530,90 565,86 630,90 664,112 690,92 735,90 765,142 797,89 840,93 897,125 930,112 990,103 1031,68 1065,110 1098,84 1133,100 1165,64 1192,93 1230,98 1265,127 1298,95 1332,110 1364,78 1395,118 1435,114 1465,64 1498,118 1540,127 1580,127 1600,95 1633,88 1665,102 1700,125 1733,136 1765,115 1800,112 1830,108 1850,109']
    ]
  },
  mem: {
    sx: 1 / 2.178, sy: 1 / 3, ox: 79, oy: 670,
    lines: [['#ab1852', '79,773 250,773 290,771 400,773 1407,773']]
  },
  net: {
    sx: 1 / 2.178, sy: 1 / 3, ox: 79, oy: 412,
    lines: [
      ['#6a5070', '985,557 1407,557'],
      ['#e5230a', '79,560 92,557 112,544 133,556 215,557 230,550 290,552 310,556 335,556 354,547 378,556 480,556 500,553 525,558 722,558 742,552 765,558 862,557 887,551 910,558 940,557 962,552 985,558'],
      ['#2f7fb8', '79,559 92,557 112,523 133,553 160,557 215,557 230,533 262,528 282,541 300,548 333,555 354,485 378,550 410,550 430,555 452,547 475,552 500,543 522,556 600,554 640,556 670,553 690,557 722,556 742,550 765,557 790,556 812,550 862,556 887,548 910,557 935,555 962,547 985,557']
    ]
  }
};

const X0 = 20.5, Y0 = 6.5, W = 610, H = 50;

function curve(s, text) {
  const pts = text.split(' ').map(p => {
    const [x, y] = p.split(',').map(Number);
    return [X0 + (x - s.ox) * s.sx, Y0 + (y - s.oy) * s.sy];
  });
  let d = `M${pts[0]}`;
  for (let i = 1; i < pts.length; i++) {
    const mx = (pts[i - 1][0] + pts[i][0]) / 2;
    d += `C${mx} ${pts[i - 1][1]} ${mx} ${pts[i][1]} ${pts[i]}`;
  }
  return d;
}

document.querySelectorAll('.chart').forEach(svg => {
  const { chart, top, mid, low } = svg.dataset;
  const s = series[chart];
  const grid = [102, 204, 305, 407, 509];
  const id = 'bg-' + chart;
  let out = `<defs><linearGradient id="${id}" x2="0" y2="1"><stop stop-color="#303030"/><stop offset="1" stop-color="#272727"/></linearGradient></defs>`;
  out += `<rect x="${X0}" y="${Y0}" width="${W}" height="${H}" fill="url(#${id})"/>`;
  out += `<path stroke="#505050" d="M${X0} ${Y0 + 25}h${W + 4}` + grid.map(g => `M${X0 + g} ${Y0}v${H + 4}`).join('') + '"/>';
  out += s.lines.map(([c, p]) => `<path d="${curve(s, p)}" fill="none" stroke="${c}" stroke-width="1.1"/>`).join('');
  out += `<path fill="none" stroke="#6c6c6c" d="M${X0} ${Y0 + H + 4}V${Y0}h${W + 4}M${X0 + W} ${Y0}v${H + 4}M${X0} ${Y0 + H}h${W + 4}"/>`;
  out += `<text x="637" y="13">${top}</text><text x="637" y="34">${mid}</text><text x="637" y="54">${low}</text>`;
  out += ['1 min', '50 secs', '40 secs', '30 secs', '20 secs', '10 secs']
    .map((t, i) => `<text x="${i ? X0 + grid[i - 1] - 11 : 24}" y="69">${t}</text>`).join('');
  svg.innerHTML = out;
});
```
